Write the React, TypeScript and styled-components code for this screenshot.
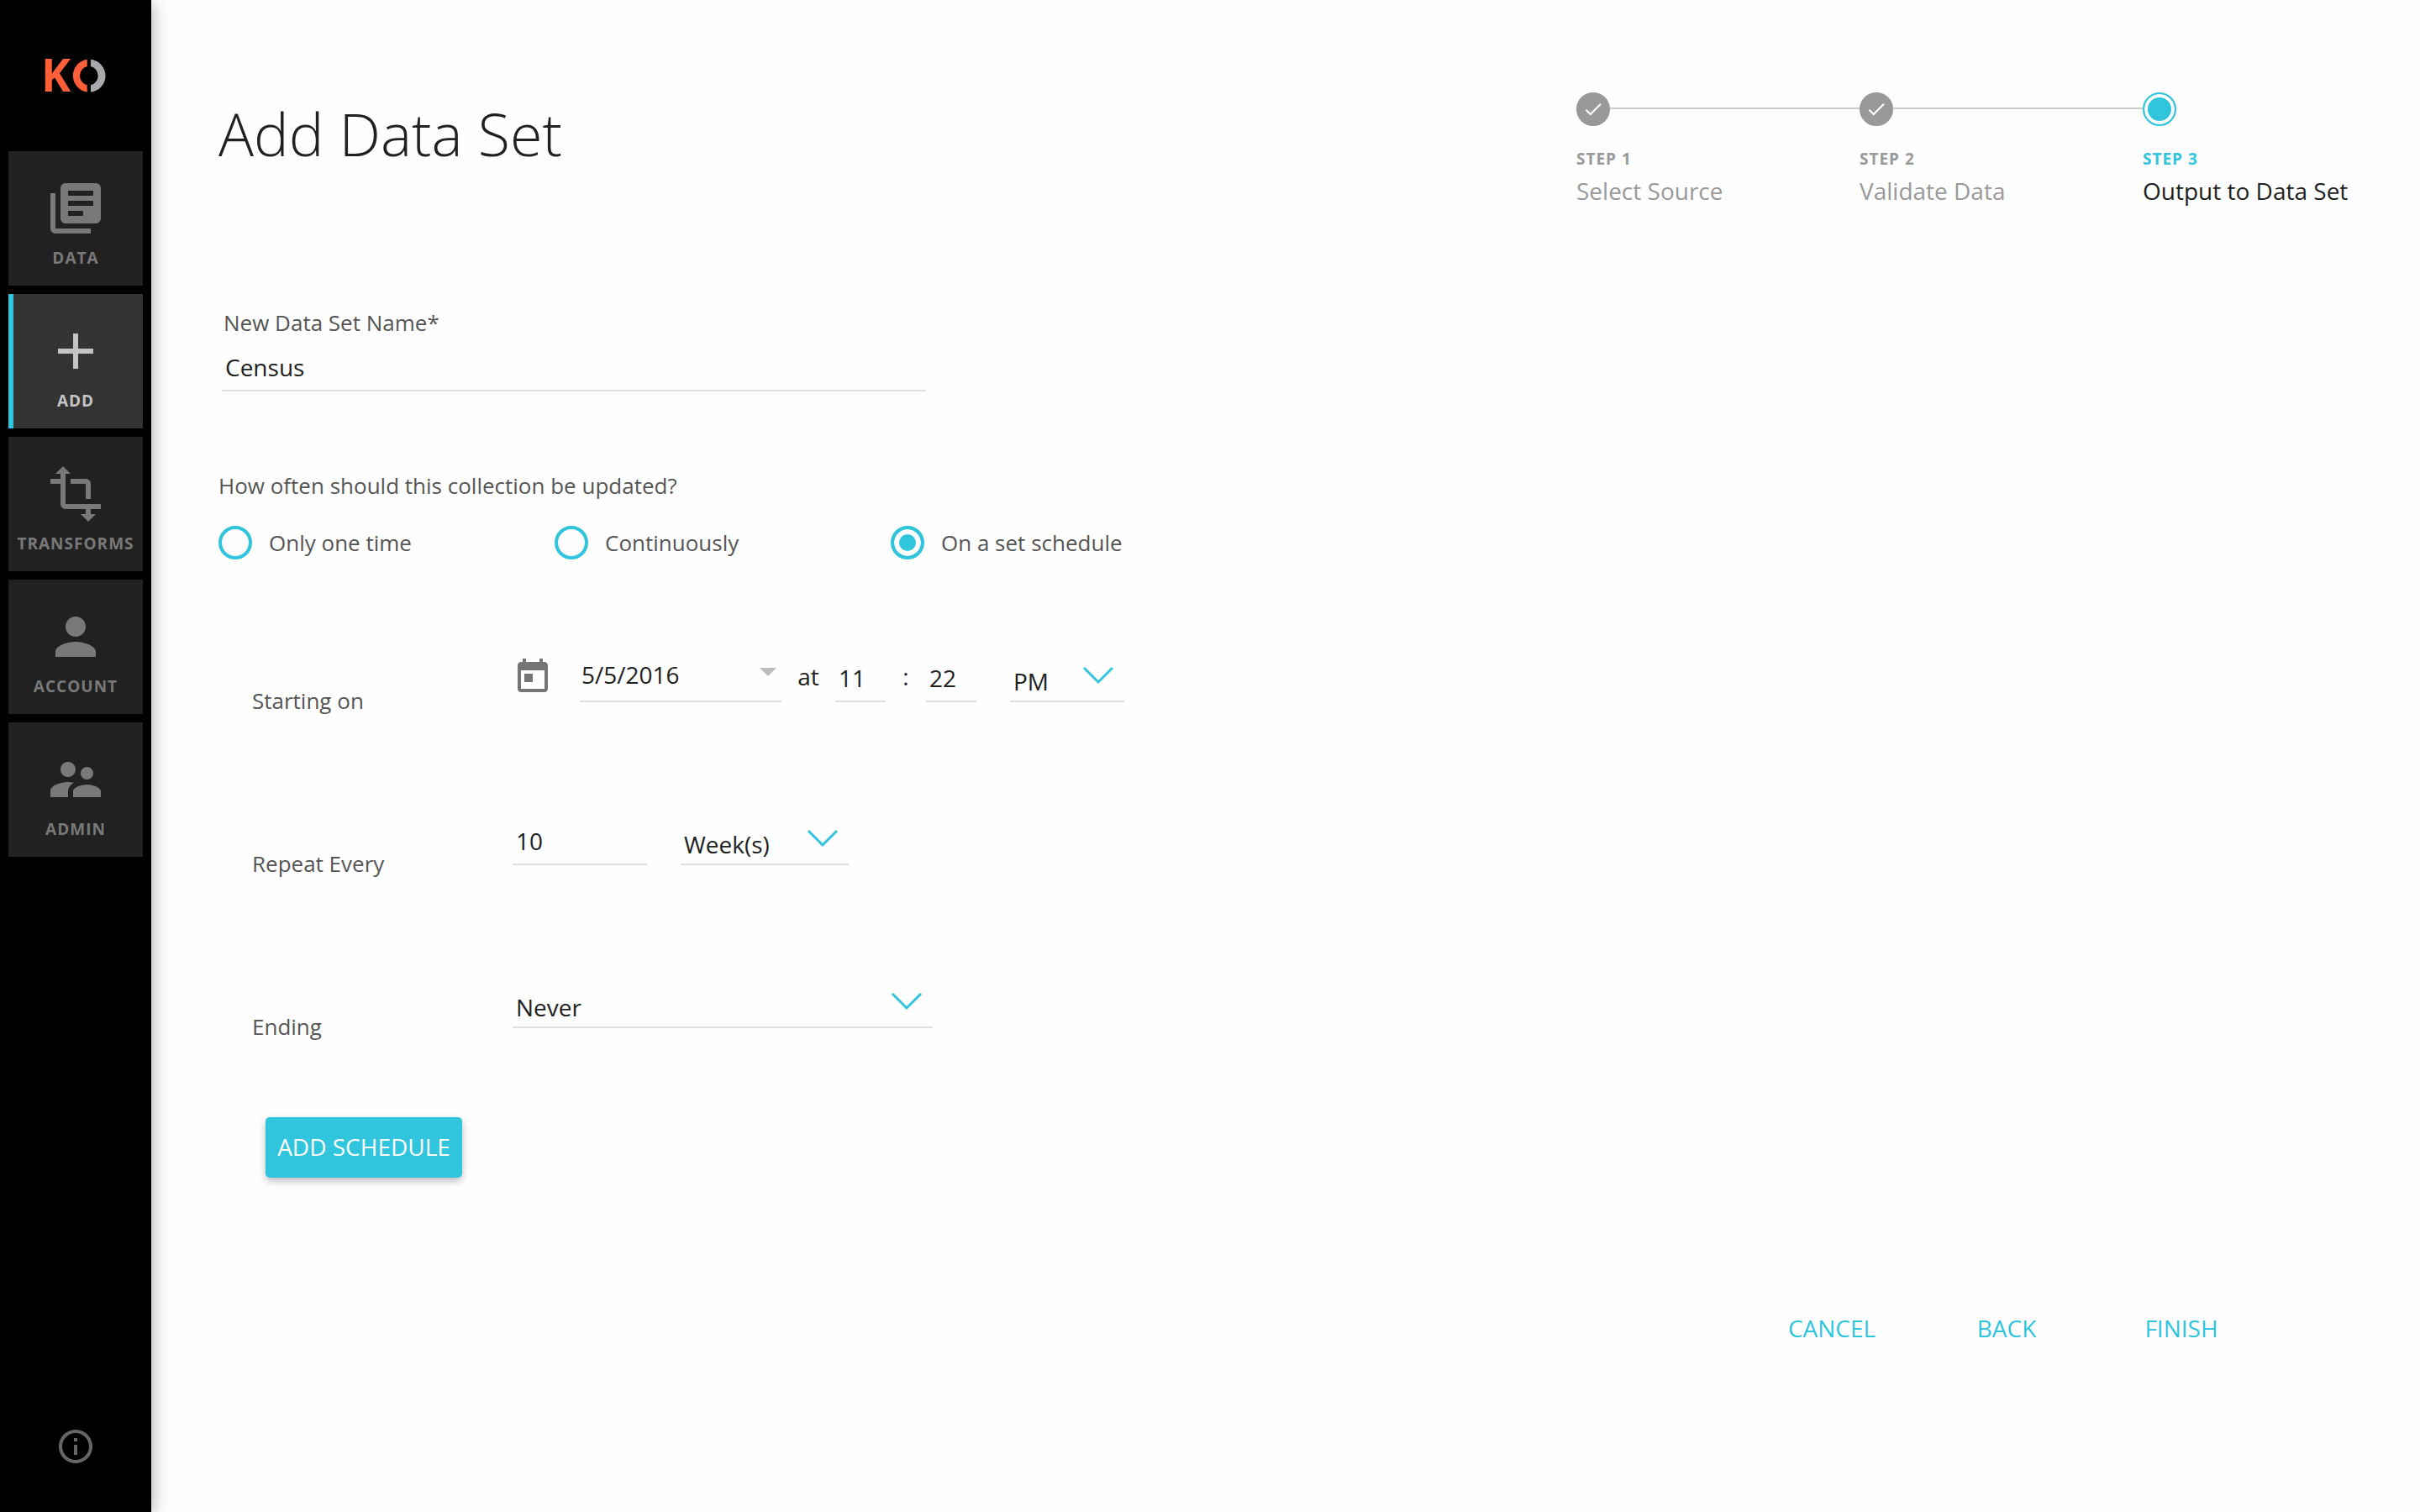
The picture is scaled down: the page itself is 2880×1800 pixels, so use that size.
import React, { useState } from "react";
import styled, { createGlobalStyle } from "styled-components";

const accent = "#30c5dc";
const ink = "#212121";
const muted = "#555555";
const faded = "#999999";
const rule = "#e0e0e0";

const GlobalStyle = createGlobalStyle`
  *, *::before, *::after { box-sizing: border-box; }
  body { margin: 0; background: #fefefe; }
  body, input, select, button { font-family: "Open Sans", "Noto Sans", sans-serif; }
`;

const Page = styled.div`
  display: flex;
  min-height: 100vh;
  color: ${ink};
  font-size: 28px;
`;

const Sidebar = styled.nav`
  display: flex;
  flex-direction: column;
  flex: 0 0 180px;
  padding: 0 10px 54px;
  background: #000000;
  box-shadow: 0 4px 20px rgba(0, 0, 0, 0.35);
`;

const Brand = styled.a`
  display: flex;
  align-items: center;
  justify-content: center;
  height: 180px;
  text-decoration: none;
`;

const BrandLetter = styled.text`
  font-family: "Open Sans", sans-serif;
  font-size: 53px;
  font-weight: 700;
`;

const NavList = styled.ul`
  display: flex;
  flex-direction: column;
  gap: 10px;
  margin: 0;
  padding: 0;
  list-style: none;
`;

const NavLink = styled.a<{ $active: boolean }>`
  display: flex;
  flex-direction: column;
  align-items: center;
  gap: 8px;
  height: 160px;
  padding-top: 32px;
  background: ${(p) => (p.$active ? "#333333" : "#212121")};
  box-shadow: ${(p) => (p.$active ? `inset 6px 0 0 ${accent}` : "none")};
  color: ${(p) => (p.$active ? "#c4c4c4" : "#797979")};
  font-size: 19px;
  font-weight: 700;
  line-height: 30px;
  letter-spacing: 1px;
  text-decoration: none;
  text-transform: uppercase;
`;

const InfoButton = styled.button`
  display: flex;
  align-self: center;
  margin-top: auto;
  padding: 0;
  border: 0;
  background: none;
  color: #666666;
`;

const Glyph = styled.svg<{ $size: number }>`
  flex: none;
  width: ${(p) => p.$size}px;
  height: ${(p) => p.$size}px;
  fill: currentColor;
`;

const Main = styled.main`
  flex: 1;
  padding: 110px 80px 80px;
`;

const Header = styled.header`
  display: flex;
  justify-content: space-between;
  align-items: flex-start;
  margin-bottom: 116px;
`;

const Title = styled.h1`
  margin: 0;
  font-size: 70px;
  font-weight: 300;
  line-height: 98px;
`;

const Steps = styled.ol`
  display: flex;
  margin: 0;
  padding: 0;
  list-style: none;
`;

const Step = styled.li<{ $current: boolean }>`
  min-width: ${(p) => (p.$current ? "250px" : "337px")};
  color: ${(p) => (p.$current ? ink : faded)};
`;

const StepTrack = styled.div`
  display: flex;
  align-items: center;
  margin-bottom: 24px;
`;

const StepDot = styled.span<{ $current: boolean }>`
  display: flex;
  align-items: center;
  justify-content: center;
  flex: none;
  width: 40px;
  height: 40px;
  border: 2px solid ${(p) => (p.$current ? accent : faded)};
  border-radius: 50%;
  background: ${(p) => (p.$current ? accent : faded)};
  box-shadow: ${(p) => (p.$current ? "inset 0 0 0 4px #fefefe" : "none")};
  color: #ffffff;
`;

const StepLine = styled.span`
  flex: 1;
  height: 2px;
  margin-bottom: 2px;
  background: #cccccc;
`;

const StepNumber = styled.div<{ $current: boolean }>`
  color: ${(p) => (p.$current ? accent : faded)};
  font-size: 19px;
  font-weight: 700;
  line-height: 30px;
  letter-spacing: 1px;
`;

const StepName = styled.div`
  line-height: 46px;
`;

const NameField = styled.div`
  display: flex;
  flex-direction: column;
  gap: 6px;
  max-width: 842px;
  margin-bottom: 94px;
  padding-left: 4px;
`;

const Label = styled.label`
  color: ${muted};
  font-size: 26px;
  line-height: 36px;
`;

const FieldLabel = styled(Label)`
  padding-left: 2px;
`;

const TextInput = styled.input<{ $width?: string }>`
  width: ${(p) => p.$width ?? "100%"};
  height: 58px;
  padding: 2px 0 0 4px;
  border: 0;
  border-bottom: 2px solid ${rule};
  border-radius: 0;
  outline: 0;
  background: none;
  color: ${ink};
  font-size: 28px;
`;

const DateInput = styled(TextInput)`
  padding: 0 2px 6px;
`;

const Frequency = styled.fieldset`
  margin: 0 0 112px;
  padding: 0;
  border: 0;
`;

const Legend = styled.legend`
  margin-bottom: 30px;
  padding: 0;
  color: ${muted};
  font-size: 26px;
  line-height: 36px;
`;

const Options = styled.div`
  display: grid;
  grid-template-columns: repeat(3, 400px);
`;

const Option = styled.label`
  display: flex;
  gap: 20px;
  color: ${muted};
  font-size: 26px;
  line-height: 40px;
`;

const Radio = styled.input`
  appearance: none;
  width: 40px;
  height: 40px;
  margin: 0;
  border: 4px solid ${accent};
  border-radius: 50%;

  &:checked {
    background: ${accent};
    box-shadow: inset 0 0 0 6px #fefefe;
  }
`;

const Schedule = styled.section`
  display: flex;
  flex-direction: column;
  gap: 120px;
  padding-left: 40px;
`;

const ScheduleRow = styled.div`
  display: grid;
  grid-template-columns: 310px 1fr;
  height: 74px;
`;

const RowLabel = styled(Label)`
  align-self: end;
`;

const Controls = styled.div<{ $gap?: number }>`
  display: flex;
  align-items: flex-start;
  gap: ${(p) => p.$gap ?? 0}px;
`;

const CalendarSlot = styled.span`
  display: flex;
  align-items: center;
  flex: 0 0 80px;
  height: 56px;
  color: #757575;
`;

const Joiner = styled.span<{ $width: number }>`
  flex: 0 0 ${(p) => p.$width}px;
  line-height: 54px;
  text-align: center;
`;

const ControlWrap = styled.span<{ $width: number; $before?: number }>`
  position: relative;
  width: ${(p) => p.$width}px;
  margin-left: ${(p) => p.$before ?? 0}px;
`;

const SelectBox = styled.select`
  appearance: none;
  display: block;
  width: 100%;
  height: 58px;
  padding: 10px 0 0 4px;
  border: 0;
  border-bottom: 2px solid ${rule};
  border-radius: 0;
  outline: 0;
  background: none;
  color: ${ink};
  font-size: 28px;
`;

const Chevron = styled.svg`
  position: absolute;
  top: 15px;
  right: 12px;
  width: 38px;
  height: 22px;
  fill: none;
  stroke: ${accent};
  stroke-width: 3;
  pointer-events: none;
`;

const Caret = styled.svg`
  position: absolute;
  top: 17px;
  right: 6px;
  width: 20px;
  height: 10px;
  fill: #bdbdbd;
  pointer-events: none;
`;

const RaisedButton = styled.button`
  min-width: 234px;
  height: 72px;
  margin: 90px 0 0 56px;
  padding: 0 12px 2px;
  border: 0;
  border-radius: 5px;
  background: ${accent};
  box-shadow: 0 4px 10px rgba(0, 0, 0, 0.26);
  color: #ffffff;
  font-size: 28px;
`;

const Actions = styled.footer`
  display: flex;
  justify-content: flex-end;
  gap: 32px;
  margin-top: 144px;
  padding-right: 116px;
`;

const FlatButton = styled.button`
  min-width: 176px;
  height: 72px;
  padding: 0 0 2px;
  border: 0;
  background: none;
  color: ${accent};
  font-size: 28px;
`;

const Icon = ({ d, size }: { d: string; size: number }) => (
  <Glyph $size={size} viewBox="0 0 24 24" aria-hidden="true">
    <path d={d} />
  </Glyph>
);

const icons = {
  data: "M4 6H2v14c0 1.1.9 2 2 2h14v-2H4V6zm16-4H8c-1.1 0-2 .9-2 2v12c0 1.1.9 2 2 2h12c1.1 0 2-.9 2-2V4c0-1.1-.9-2-2-2zm-1 9H9V9h10v2zm-4 4H9v-2h6v2zm4-8H9V5h10v2z",
  add: "M19 13h-6v6h-2v-6H5v-2h6V5h2v6h6v2z",
  transforms:
    "M22 18v-2H8V4h2L7 1 4 4h2v2H2v2h4v8c0 1.1.9 2 2 2h8v2h-2l3 3 3-3h-2v-2h4zM10 8h6v6h2V8c0-1.1-.9-2-2-2h-6v2z",
  account:
    "M12 12c2.21 0 4-1.79 4-4s-1.79-4-4-4-4 1.79-4 4 1.79 4 4 4zm0 2c-2.67 0-8 1.34-8 4v2h16v-2c0-2.66-5.33-4-8-4z",
  admin:
    "M16.5 12c1.38 0 2.49-1.12 2.49-2.5S17.88 7 16.5 7C15.12 7 14 8.12 14 9.5s1.12 2.5 2.5 2.5zM9 11c1.66 0 2.99-1.34 2.99-3S10.66 5 9 5C7.34 5 6 6.34 6 8s1.34 3 3 3zm7.5 3c-1.83 0-5.5.92-5.5 2.75V19h11v-2.25c0-1.83-3.67-2.75-5.5-2.75zM9 13c-2.33 0-7 1.17-7 3.5V19h7v-2.25c0-.85.33-2.34 2.37-3.47C10.5 13.1 9.66 13 9 13z",
  info: "M11 17h2v-6h-2v6zm1-15C6.48 2 2 6.48 2 12s4.48 10 10 10 10-4.48 10-10S17.52 2 12 2zm0 18c-4.41 0-8-3.59-8-8s3.59-8 8-8 8 3.59 8 8-3.59 8-8 8zM11 9h2V7h-2v2z",
  today:
    "M19 3h-1V1h-2v2H8V1H6v2H5c-1.11 0-1.99.9-1.99 2L3 19c0 1.1.89 2 2 2h14c1.1 0 2-.9 2-2V5c0-1.1-.9-2-2-2zm0 16H5V8h14v11zM7 10h5v5H7z",
  check: "M9 16.17L4.83 12l-1.42 1.41L9 19 21 7l-1.41-1.41z",
};

const navItems = [
  { name: "Data", icon: icons.data },
  { name: "Add", icon: icons.add },
  { name: "Transforms", icon: icons.transforms },
  { name: "Account", icon: icons.account },
  { name: "Admin", icon: icons.admin },
];

const steps = ["Select Source", "Validate Data", "Output to Data Set"];
const frequencies = ["Only one time", "Continuously", "On a set schedule"];

type SelectProps = {
  id?: string;
  label?: string;
  width: number;
  before?: number;
  options: string[];
};

const Select = ({ id, label, width, before, options }: SelectProps) => (
  <ControlWrap $width={width} $before={before}>
    <SelectBox id={id} aria-label={label}>
      {options.map((o) => (
        <option key={o}>{o}</option>
      ))}
    </SelectBox>
    <Chevron viewBox="0 0 38 22" aria-hidden="true">
      <path d="M2 2L19 19L36 2" />
    </Chevron>
  </ControlWrap>
);

const Logo = () => (
  <svg width="88" height="80" viewBox="-8 -20 88 80" role="img" aria-label="KO">
    <BrandLetter x="-5" y="39" fill="#ff5f38">
      K
    </BrandLetter>
    <path d="M49.7 0.8A19.6 19.6 0 0 0 49.7 39.6V31.3A11.5 11.5 0 0 1 49.7 9Z" fill="#ff5f38" />
    <path d="M54 0.8A19.5 19.5 0 0 1 54 39.6V31.3A11.5 11.5 0 0 0 54 9Z" fill="#a7a9ac" />
  </svg>
);

export default function App() {
  const [name, setName] = useState("Census");
  const [frequency, setFrequency] = useState("On a set schedule");

  return (
    <>
      <GlobalStyle />
      <Page>
        <Sidebar>
          <Brand href="#home">
            <Logo />
          </Brand>
          <NavList>
            {navItems.map((item) => (
              <li key={item.name}>
                <NavLink href={`#${item.name.toLowerCase()}`} $active={item.name === "Add"}>
                  <Icon d={item.icon} size={72} />
                  {item.name}
                </NavLink>
              </li>
            ))}
          </NavList>
          <InfoButton type="button" aria-label="Information">
            <Icon d={icons.info} size={48} />
          </InfoButton>
        </Sidebar>

        <Main>
          <Header>
            <Title>Add Data Set</Title>
            <Steps>
              {steps.map((step, i) => {
                const current = i === steps.length - 1;
                return (
                  <Step key={step} $current={current}>
                    <StepTrack>
                      <StepDot $current={current}>{!current && <Icon d={icons.check} size={26} />}</StepDot>
                      {!current && <StepLine />}
                    </StepTrack>
                    <StepNumber $current={current}>STEP {i + 1}</StepNumber>
                    <StepName>{step}</StepName>
                  </Step>
                );
              })}
            </Steps>
          </Header>

          <NameField>
            <FieldLabel htmlFor="name">New Data Set Name*</FieldLabel>
            <TextInput id="name" value={name} onChange={(e) => setName(e.target.value)} />
          </NameField>

          <Frequency>
            <Legend>How often should this collection be updated?</Legend>
            <Options>
              {frequencies.map((f) => (
                <Option key={f}>
                  <Radio
                    type="radio"
                    name="frequency"
                    checked={frequency === f}
                    onChange={() => setFrequency(f)}
                  />
                  {f}
                </Option>
              ))}
            </Options>
          </Frequency>

          <Schedule>
            <ScheduleRow>
              <RowLabel htmlFor="start">Starting on</RowLabel>
              <Controls>
                <CalendarSlot>
                  <Icon d={icons.today} size={48} />
                </CalendarSlot>
                <ControlWrap $width={240}>
                  <DateInput id="start" defaultValue="5/5/2016" />
                  <Caret viewBox="0 0 20 10" aria-hidden="true">
                    <path d="M0 0H20L10 10Z" />
                  </Caret>
                </ControlWrap>
                <Joiner $width={64}>at</Joiner>
                <TextInput $width="60px" aria-label="Hour" defaultValue="11" />
                <Joiner $width={48}>:</Joiner>
                <TextInput $width="60px" aria-label="Minute" defaultValue="22" />
                <Select label="AM or PM" width={136} before={40} options={["PM", "AM"]} />
              </Controls>
            </ScheduleRow>
            <ScheduleRow>
              <RowLabel htmlFor="repeat">Repeat Every</RowLabel>
              <Controls $gap={40}>
                <TextInput id="repeat" $width="160px" defaultValue="10" />
                <Select label="Repeat unit" width={200} options={["Week(s)", "Day(s)", "Month(s)"]} />
              </Controls>
            </ScheduleRow>
            <ScheduleRow>
              <RowLabel htmlFor="ending">Ending</RowLabel>
              <Controls>
                <Select id="ending" width={500} options={["Never", "On date"]} />
              </Controls>
            </ScheduleRow>
          </Schedule>

          <RaisedButton type="button">ADD SCHEDULE</RaisedButton>

          <Actions>
            <FlatButton type="button">CANCEL</FlatButton>
            <FlatButton type="button">BACK</FlatButton>
            <FlatButton type="button">FINISH</FlatButton>
          </Actions>
        </Main>
      </Page>
    </>
  );
}
